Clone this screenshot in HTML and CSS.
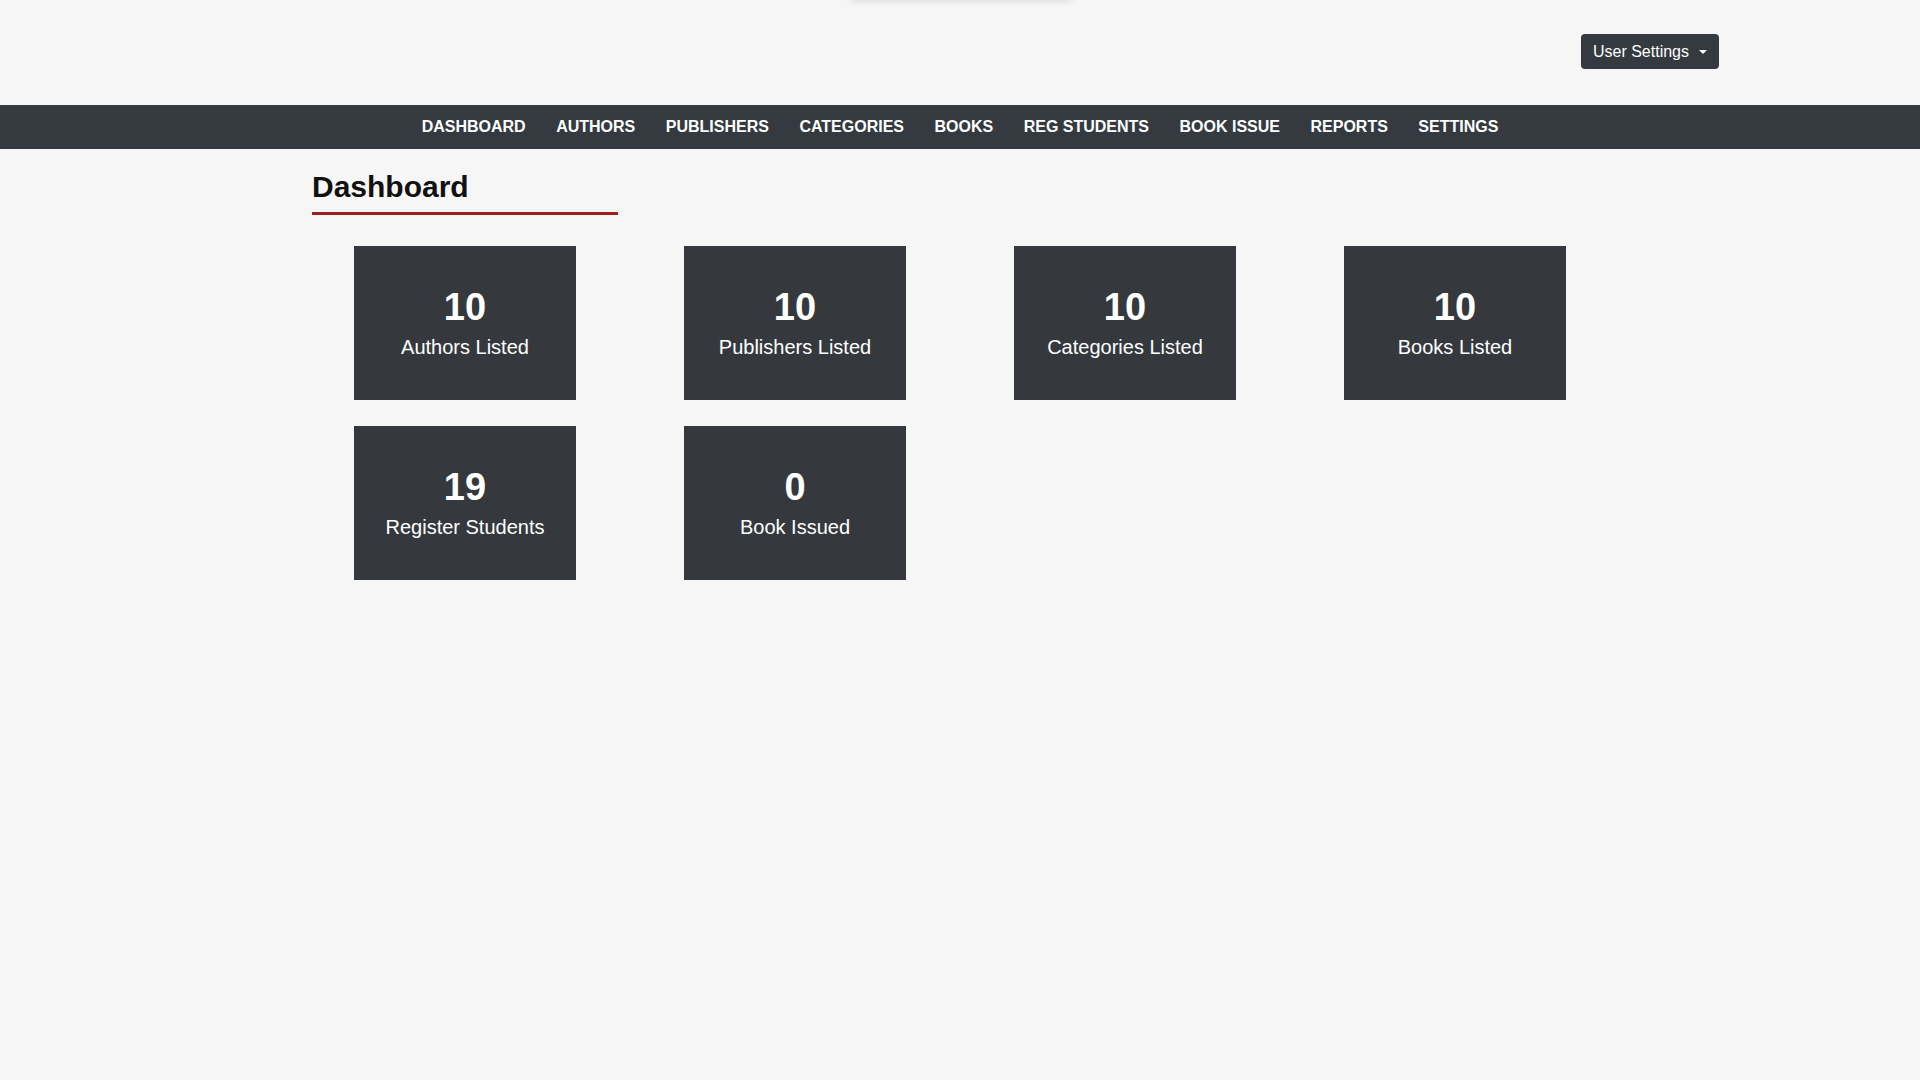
FILE: index.html
```html
<!DOCTYPE html>
<html lang="en">
<head>
<meta charset="utf-8">
<title>Dashboard</title>
<link rel="stylesheet" href="styles.css">
</head>
<body>
<div class="ghost"></div>
<header class="topbar">
  <button class="user-btn" type="button">User Settings<span class="caret"></span></button>
</header>
<nav class="mainnav">
  <a href="#">DASHBOARD</a>
  <a href="#">AUTHORS</a>
  <a href="#">PUBLISHERS</a>
  <a href="#">CATEGORIES</a>
  <a href="#">BOOKS</a>
  <a href="#">REG STUDENTS</a>
  <a href="#">BOOK ISSUE</a>
  <a href="#">REPORTS</a>
  <a href="#">SETTINGS</a>
</nav>
<main class="container">
  <h2 class="page-title">Dashboard</h2>
  <div class="cards">
    <div class="card"><div class="num">10</div><div class="label">Authors Listed</div></div>
    <div class="card"><div class="num">10</div><div class="label">Publishers Listed</div></div>
    <div class="card"><div class="num">10</div><div class="label">Categories Listed</div></div>
    <div class="card"><div class="num">10</div><div class="label">Books Listed</div></div>
    <div class="card"><div class="num">19</div><div class="label">Register Students</div></div>
    <div class="card"><div class="num">0</div><div class="label">Book Issued</div></div>
  </div>
</main>
</body>
</html>
```
FILE: styles.css
```css
* { box-sizing: border-box; }
html, body { margin: 0; padding: 0; }
body {
  background: #f6f6f6;
  font-family: "Liberation Sans", Arial, Helvetica, sans-serif;
  color: #111;
  min-height: 1080px;
  position: relative;
  overflow: hidden;
}
.ghost {
  position: absolute;
  top: -40px;
  left: 850px;
  width: 223px;
  height: 40px;
  background: #f6f6f6;
  box-shadow: 0 2px 6px rgba(0,0,0,0.09);
}
.topbar {
  height: 105px;
  display: flex;
  justify-content: flex-end;
  align-items: flex-start;
  padding: 34px 201px 0 0;
}
.user-btn {
  display: flex;
  align-items: center;
  height: 35px;
  padding: 0 12px;
  border: none;
  border-radius: 4px;
  background: #343a40;
  color: #fff;
  font-family: "Liberation Sans", Arial, Helvetica, sans-serif;
  font-size: 16px;
  line-height: 24px;
  white-space: nowrap;
  cursor: pointer;
}
.caret {
  display: inline-block;
  margin-left: 10px;
  width: 0;
  height: 0;
  border-top: 4px solid #fff;
  border-left: 4px solid transparent;
  border-right: 4px solid transparent;
}
.mainnav {
  height: 44px;
  background: #343a40;
  display: flex;
  justify-content: center;
  align-items: center;
}
.mainnav a {
  color: #fff;
  text-decoration: none;
  font-weight: bold;
  font-size: 16px;
  line-height: 20px;
  padding: 0 15.25px;
  white-space: nowrap;
}
.container {
  width: 1320px;
  margin: 0 auto;
}
.page-title {
  margin: 20px 0 0 12px;
  width: 306px;
  font-size: 30px;
  line-height: 36px;
  font-weight: bold;
  color: #111;
  padding-bottom: 7px;
  border-bottom: 3px solid #9e1f22;
}
.cards {
  margin-top: 31px;
  display: grid;
  grid-template-columns: repeat(4, 330px);
  row-gap: 26px;
  justify-items: center;
}
.card {
  width: 222px;
  height: 154px;
  background: #35393e;
  color: #fff;
  display: flex;
  flex-direction: column;
  align-items: center;
  justify-content: center;
  text-align: center;
}
.num {
  font-size: 38px;
  font-weight: bold;
  line-height: 46px;
}
.label {
  margin-top: 2px;
  font-size: 20px;
  line-height: 30px;
}
```
